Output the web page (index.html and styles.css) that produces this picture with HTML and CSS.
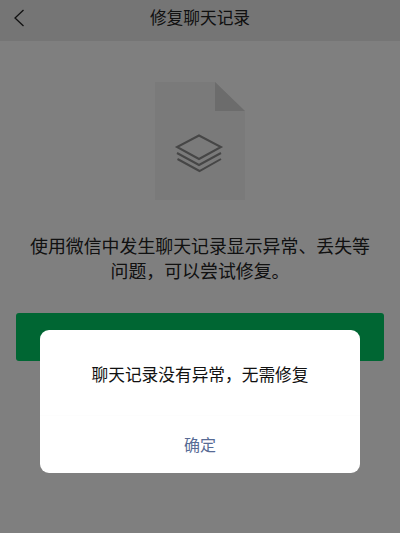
FILE: index.html
```html
<!DOCTYPE html>
<html lang="zh-CN">
<head>
    <meta charset="UTF-8">
    <meta name="viewport" content="width=device-width, initial-scale=1.0">
    <title>修复聊天记录</title>
    <link rel="stylesheet" href="styles.css">
</head>
<body>
    <!-- Header -->
    <header class="top-bar">
        <svg class="back-icon" width="12" height="18" viewBox="0 0 12 18">
            <path d="M10.500 1L2 9l8.500 8" fill="none" stroke="#222" stroke-width="1.300"/>
        </svg>
        <h1>修复聊天记录</h1>
    </header>

    <!-- Main Content -->
    <main class="content">
        <svg class="file-icon" width="90" height="118" viewBox="0 0 90 118">
            <path d="M0 0H60L90 29V118H0Z" fill="#f4f4f4"/>
            <path d="M60 0L90 29H60Z" fill="#d8d8d8"/>
            <g fill="none" stroke="#8c8c8c" stroke-width="2">
                <path d="M44 53.500L66 65 44 77 22 65Z"/>
                <path d="M22 71L44 83 66 71"/>
                <path d="M22.500 77L44.500 89 66 77"/>
            </g>
        </svg>
        <p class="intro">使用微信中发生聊天记录显示异常、丢失等<br>问题&#xFF0C;可以尝试修复。</p>
        <button class="repair-btn"></button>
    </main>

    <!-- Dialog -->
    <div class="overlay">
        <div class="dialog">
            <p class="dialog-msg">聊天记录没有异常&#xFF0C;无需修复</p>
            <div class="dialog-action">确定</div>
        </div>
    </div>
</body>
</html>
```

FILE: styles.css
```css
/* General Styles */
body {
    margin: 0;
    background-color: #ffffff;
    font-family: "Noto Sans CJK SC", "Noto Sans", sans-serif;
    color: #222222;
    height: 533px;
    overflow: hidden;
}

/* Header */
.top-bar {
    height: 41px;
    background-color: #ebebeb;
    display: flex;
    align-items: center;
    justify-content: center;
    position: relative;
}

.top-bar h1 {
    margin: 0 0 7px;
    font-size: 16.7px;
    font-weight: 400;
}

.back-icon {
    position: absolute;
    left: 13px;
    top: 8.500px;
}

/* Main Content */
.content {
    display: flex;
    flex-direction: column;
    align-items: center;
    padding: 41px 16px 0;
}

.file-icon {
    display: block;
}

.intro {
    margin: 33px 0 0;
    font-size: 17.9px;
    line-height: 25px;
    text-align: center;
    white-space: nowrap;
}

.repair-btn {
    width: 100%;
    height: 48px;
    margin-top: 30px;
    background-color: #00cc66;
    border: none;
    border-radius: 3px;
}

/* Dialog */
.overlay {
    position: fixed;
    inset: 0;
    background-color: rgba(0, 0, 0, 0.5);
    display: flex;
    justify-content: center;
    align-items: flex-start;
    padding-top: 330px;
}

.dialog {
    width: 320px;
    background-color: #ffffff;
    border-radius: 9px;
}

.dialog-msg {
    margin: 0;
    height: 86px;
    box-sizing: border-box;
    padding-top: 31px;
    font-size: 16.7px;
    line-height: 26px;
    text-align: center;
    color: #111111;
    border-bottom: 1px solid #fdfdfd;
}

.dialog-action {
    height: 57px;
    box-sizing: border-box;
    padding-top: 15px;
    font-size: 16px;
    line-height: 26px;
    text-align: center;
    color: #576b95;
}
```
